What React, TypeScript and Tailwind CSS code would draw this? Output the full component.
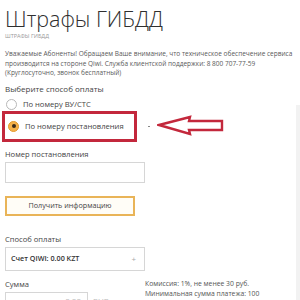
import React from 'react';

function Radio({ checked = false }: { checked?: boolean }) {
  if (checked) {
    return (
      <span className="flex h-[11px] w-[11px] shrink-0 items-center justify-center rounded-full border border-[#e39a2c] bg-[#f6b24a]">
        <span className="h-[4px] w-[4px] rounded-full bg-[#3a2a1a]" />
      </span>
    );
  }
  return <span className="h-[11px] w-[11px] shrink-0 rounded-full border border-[#b8b8b8] bg-white" />;
}

function Arrow() {
  return (
    <svg width="70" height="22" viewBox="0 0 70 22" className="shrink-0">
      <polygon
        points="2,10 33,2 32,6 65,6 65,15 32,15 33,19"
        fill="white"
        stroke="#c3283c"
        strokeWidth="2.4"
        strokeLinejoin="miter"
      />
    </svg>
  );
}

export default function App() {
  return (
    <div className="flex h-[300px] w-[300px] overflow-hidden bg-white font-['Open_Sans',sans-serif] text-[#333]">
      <main className="w-[296px] shrink-0 pl-[5px]">
        <h1 className="mt-[6px] text-[21.5px] font-light leading-[25px] text-[#2f2f2f]">Штрафы ГИБДД</h1>
        <p className="mt-[1px] text-[5.5px] uppercase leading-[8px] text-[#9a9a9a]">Штрафы ГИБДД</p>

        <div className="mt-[9px] whitespace-nowrap text-[6.5px] leading-[9.6px] text-[#5a5a5a]">
          <p>Уважаемые Абоненты! Обращаем Ваше внимание, что техническое обеспечение сервиса</p>
          <p>производится на стороне Qiwi. Служба клиентской поддержки: 8 800 707-77-59</p>
          <p>(Круглосуточно, звонок бесплатный)</p>
        </div>

        <p className="mt-[6px] text-[8px] leading-[10px] text-[#444]">Выберите способ оплаты</p>

        <div className="mt-[5px] flex h-[12px] items-center gap-[6px] pl-[1px]">
          <Radio />
          <span className="text-[7.6px] text-[#444]">По номеру ВУ/СТС</span>
        </div>

        <div className="-ml-[3px] flex items-center">
          <div className="flex h-[31px] w-[135px] items-center gap-[6px] border-[3px] border-[#c3283c] bg-white pl-[3px]">
            <Radio checked />
            <span className="text-[7.6px] text-[#444]">По номеру постановления</span>
          </div>
          <span className="ml-[11px] h-[1.5px] w-[1.5px] rounded-full bg-[#777]" />
          <span className="ml-[7px]">
            <Arrow />
          </span>
        </div>

        <p className="mt-[7px] text-[7.6px] leading-[10px] text-[#444]">Номер постановления</p>
        <div className="mt-[3px] h-[21px] w-[140px] border border-[#d6d6d6] bg-white" />

        <button className="mt-[13px] flex h-[20px] w-[130px] items-center justify-center border-2 border-[#e9b458] bg-[#fffdf7] text-[7.2px] text-[#444]">
          Получить информацию
        </button>

        <p className="mt-[18px] text-[7.6px] leading-[10px] text-[#444]">Способ оплаты</p>
        <div className="mt-[3px] flex h-[24px] w-[140px] items-center justify-between border border-[#d6d6d6] bg-white pl-[5px] pr-[8px]">
          <span className="text-[7.2px] font-semibold text-[#333]">Счет QIWI: 0.00 KZT</span>
          <span className="text-[8px] text-[#aaa]">+</span>
        </div>

        <div className="mt-[8px] flex">
          <div className="w-[140px] shrink-0">
            <p className="text-[7.6px] leading-[10px] text-[#444]">Сумма</p>
            <div className="mt-[3px] flex items-center">
              <div className="flex h-[18px] w-[83px] items-center justify-end border border-[#d6d6d6] pr-[6px] text-[8px] text-[#bbb]">
                0.00
              </div>
              <span className="ml-[5px] text-[8px] text-[#bbb]">RUB</span>
            </div>
          </div>
          <div className="whitespace-nowrap text-[6.8px] leading-[10px] text-[#555]">
            <p>Комиссия: 1%, не менее 30 руб.</p>
            <p>Минимальная сумма платежа: 100</p>
          </div>
        </div>
      </main>
      <aside className="mt-[105px] h-[195px] w-[4px] bg-[#f2f2f2]" />
    </div>
  );
}
